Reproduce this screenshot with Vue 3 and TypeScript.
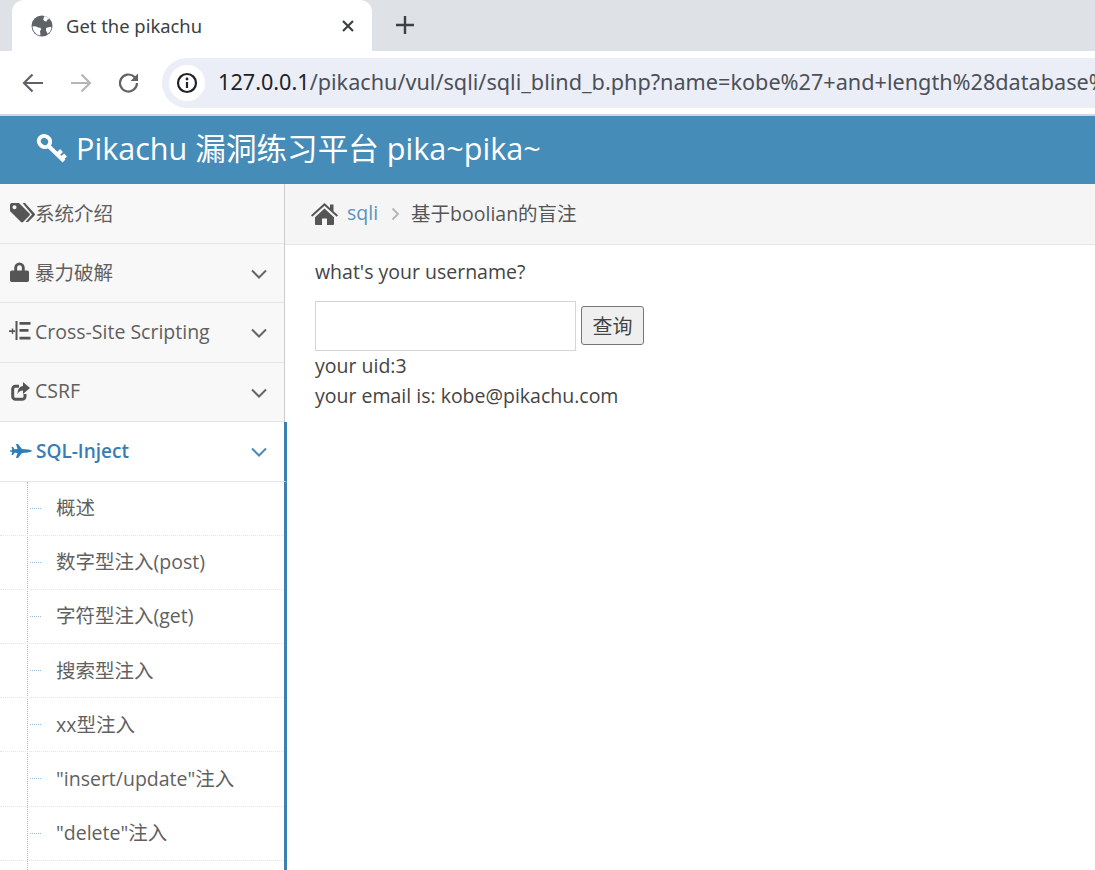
<script setup lang="ts">
interface MenuItem { label: string; icon: string; chevron: boolean }
const menu: MenuItem[] = [
  { label: '系统介绍', icon: 'tags', chevron: false },
  { label: '暴力破解', icon: 'lock', chevron: true },
  { label: 'Cross-Site Scripting', icon: 'list', chevron: true },
  { label: 'CSRF', icon: 'share', chevron: true },
]
const subs: string[] = ['概述', '数字型注入(post)', '字符型注入(get)', '搜索型注入', 'xx型注入', '"insert/update"注入', '"delete"注入', '']
</script>

<template>
  <div class="page">
    <div class="tabstrip">
      <div class="tab">
        <svg class="globe" width="22" height="22" viewBox="0 0 22 22">
          <circle cx="11" cy="11" r="10.500" fill="#5f6368" />
          <path d="M1.500 11.500c2-.6 4-.2 5.500 1l2.500.3.600 1.700-1.100 1.800.5 3.700-1.500.4C4.500 19 1.800 15.500 1.500 11.500zM13.500 1c2 .5 3.800 1.500 5 3l-2 .6-1 1.900-2.300-.6-1-1.700zM15 13l4.500-1.200 1 1.200c-.5 2.500-2 4.600-4 5.800L15 15.500z" fill="#fff" />
        </svg>
        <span class="tabtitle">Get the pikachu</span>
        <svg class="tabclose" width="14" height="14" viewBox="0 0 14 14"><path d="M2 2l10 10M12 2L2 12" stroke="#3c4043" stroke-width="2.200" /></svg>
      </div>
      <svg class="newtab" width="18" height="18" viewBox="0 0 18 18"><path d="M9 0v18M0 9h18" stroke="#3c4043" stroke-width="2.400" /></svg>
    </div>
    <div class="toolbar">
      <svg class="nav first" width="24" height="24" viewBox="0 0 24 24"><path d="M22 12H3M11.500 3.500L3 12l8.500 8.500" fill="none" stroke="#5f6368" stroke-width="2.200" /></svg>
      <svg class="nav" width="24" height="24" viewBox="0 0 24 24"><path d="M2 12h19M12.500 3.500L21 12l-8.500 8.500" fill="none" stroke="#b4b6b9" stroke-width="2.200" /></svg>
      <svg class="nav" width="24" height="24" viewBox="0 0 24 24"><path d="M20 12a8.500 8.500 0 1 1-2.600-6.100L20 8.500" fill="none" stroke="#5f6368" stroke-width="2.200" /><path d="M21 2.500V10h-7.500z" fill="#5f6368" /></svg>
      <div class="omnibox">
        <span class="info">
          <svg width="22" height="22" viewBox="0 0 22 22"><circle cx="11" cy="11" r="9" fill="none" stroke="#202124" stroke-width="2.200" /><path d="M11 10v6" stroke="#202124" stroke-width="2.200" /><circle cx="11" cy="7" r="1.400" fill="#202124" /></svg>
        </span>
        <span class="url"><span class="dark">127.0.0.1</span>/pikachu/vul/sqli/sqli_blind_b.php?name=kobe%27+and+length%28database%</span>
      </div>
    </div>
    <div class="toolbar-line"></div>
    <header class="brand">
      <svg class="key" width="32" height="32" viewBox="0 0 32 32">
        <ellipse cx="8.500" cy="9.500" rx="5.800" ry="5.300" transform="rotate(35 8.500 9.500)" fill="none" stroke="#fff" stroke-width="4" />
        <path d="M12.500 14l15.500 15M21.500 22.500l4-4M25.500 27l4-4" fill="none" stroke="#fff" stroke-width="4" />
      </svg>
      <span class="title">Pikachu 漏洞练习平台 pika~pika~</span>
    </header>
    <div class="body">
      <aside class="sidebar">
        <div v-for="m in menu" :key="m.label" class="row">
          <span class="ic">
            <svg v-if="m.icon === 'tags'" width="25" height="21" viewBox="0 0 25 21"><path d="M0 3a2 2 0 0 1 2-2h7l10.500 10.500a1.500 1.500 0 0 1 0 2L13 20a1.500 1.500 0 0 1-2 0L0 9zM4.500 3.200a2 2 0 1 0 .01 0z" fill="#555" fill-rule="evenodd" /><path d="M12.500 1h2.500l9.500 10.500a1.500 1.500 0 0 1 0 2L18 20h-2.500l6.500-7.500z" fill="#555" /></svg>
            <svg v-else-if="m.icon === 'lock'" width="19" height="20" viewBox="0 0 20 21"><path d="M4.500 9V6a5.500 5.500 0 0 1 11 0v3h2.700a1.800 1.800 0 0 1 1.800 1.800v8.400a1.800 1.800 0 0 1-1.800 1.800H1.800A1.800 1.800 0 0 1 0 19.200v-8.400A1.800 1.800 0 0 1 1.800 9zM7.500 9h5V6a2.500 2.500 0 0 0-5 0z" fill="#555" fill-rule="evenodd" /></svg>
            <svg v-else-if="m.icon === 'list'" class="shift" width="22" height="20" viewBox="0 0 22 20"><path d="M0 9.300h6v1.800H0zM6.500 0h2v19h-2zM10.500 1h11v2.700h-11zM10.500 8h9v2.700h-9zM10.500 15.700h11v2.700h-11z" fill="#555" /><path d="M3.500 7.500v5.400" stroke="#555" stroke-width="1.400" /></svg>
            <svg v-else class="share" width="19" height="19" viewBox="0 0 19 19"><path d="M14 12v2.500a2.800 2.800 0 0 1-2.800 2.800H4.500a2.800 2.800 0 0 1-2.800-2.800V7a2.800 2.800 0 0 1 2.800-2.800H8" fill="none" stroke="#555" stroke-width="3" /><path d="M12 0l7 6-7 6V8.500C9.500 8.500 7.500 9.500 6.500 12.500 6.500 7.500 8.500 4.500 12 4z" fill="#555" /></svg>
          </span>
          <span class="lbl">{{ m.label }}</span>
          <svg v-if="m.chevron" class="chev" width="16" height="10" viewBox="0 0 16 10"><path d="M1 1.500l7 7 7-7" fill="none" stroke="#666" stroke-width="2" /></svg>
        </div>
        <div class="row active">
          <span class="ic">
            <svg width="22" height="14" viewBox="0 0 22 14"><path d="M6 0h2l4 5 6 .6C20.500 6 22 6.500 22 7s-1.500 1-4 1.400L12 9l-4 5H6l1.500-5-3-.3L3 11H1.500L2.300 8 0 7.500v-1L2.300 6 1.500 3H3l1.500 2.300 3-.3z" fill="#2b7dbc" /></svg>
          </span>
          <span class="lbl strong">SQL-Inject</span>
          <svg class="chev" width="16" height="10" viewBox="0 0 16 10"><path d="M1 1.500l7 7 7-7" fill="none" stroke="#4b88b8" stroke-width="2" /></svg>
        </div>
        <ul class="sub">
          <li v-for="s in subs" :key="s"><span class="tick"></span><span class="subtext">{{ s }}</span></li>
        </ul>
      </aside>
      <main class="main">
        <nav class="crumbs">
          <svg class="home" width="27" height="22" viewBox="0 0 27 22"><path d="M13.500 0l5.500 5V1.500h3.500v6.700l4.500 4.100-1.300 1.500L13.500 2.700 1.300 13.800 0 12.300zM4 14.300l9.500-8.700 9.500 8.700V21a1 1 0 0 1-1 1h-6v-6.500h-5V22H5a1 1 0 0 1-1-1z" fill="#555" /></svg>
          <a class="link">sqli</a>
          <svg class="sep" width="9" height="14" viewBox="0 0 9 14"><path d="M1.500 1.500L7 7l-5.500 5.500" fill="none" stroke="#b4b4b4" stroke-width="1.800" /></svg>
          <span class="cur">基于boolian的盲注</span>
        </nav>
        <section class="content">
          <p class="q">what's your username?</p>
          <form class="form" @submit.prevent>
            <input class="inp" type="text" />
            <button class="btn" type="button">查询</button>
          </form>
          <p class="line">your uid:3</p>
          <p class="line">your email is: kobe@pikachu.com</p>
        </section>
      </main>
    </div>
  </div>
</template>

<style>
html, body { margin: 0; padding: 0; overflow: hidden; background: #fff; }
</style>

<style scoped>
.page {
  width: 1095px;
  height: 870px;
  overflow: hidden;
  display: flex;
  flex-direction: column;
  font-family: "Open Sans", "Noto Sans CJK SC", sans-serif;
  color: #444;
}
.tabstrip {
  height: 51px;
  background: #dee1e6;
  display: flex;
  align-items: flex-end;
  padding-left: 12px;
  flex: none;
}
.tab {
  width: 360px;
  height: 51px;
  background: #fff;
  border-radius: 12px 12px 0 0;
  display: flex;
  align-items: center;
  padding: 0 17px 0 19px;
  box-sizing: border-box;
}
.tabtitle {
  margin-left: 13px;
  flex: 1;
  font-family: "Noto Sans", sans-serif;
  font-size: 18.400px;
  color: #3c4043;
}
.newtab { margin: 0 0 17px 24px; }
.toolbar {
  height: 63px;
  display: flex;
  align-items: center;
  padding-left: 21px;
  flex: none;
  background: #fff;
}
.nav { margin-right: 24px; }
.omnibox {
  flex: 1;
  height: 50px;
  margin-left: -3px;
  background: #ebeef7;
  border-radius: 25px 0 0 25px;
  display: flex;
  align-items: center;
  overflow: hidden;
  padding-left: 7px;
  min-width: 0;
}
.info {
  width: 36px;
  height: 36px;
  border-radius: 50%;
  background: #fff;
  display: flex;
  align-items: center;
  justify-content: center;
  flex: none;
}
.url {
  margin-left: 13px;
  margin-top: -2px;
  font-family: "Noto Sans", sans-serif;
  font-size: 21.650px;
  color: #4c5058;
  white-space: nowrap;
  flex: none;
  width: 885px;
  overflow: hidden;
}
.dark { color: #202124; }
.toolbar-line { height: 2px; background: #d3d6db; flex: none; }
.brand {
  height: 68px;
  background: #468cb8;
  color: #fff;
  display: flex;
  align-items: center;
  padding-left: 36px;
  flex: none;
}
.title { font-size: 30.600px; margin-top: -6px; }
.key { margin-right: 8px; flex: none; margin-top: -4px; }
.body { flex: 1; display: flex; min-height: 0; }
.sidebar {
  width: 285px;
  flex: none;
  background: #f8f8f8;
  border-right: 1px solid #ccc;
  box-sizing: border-box;
  position: relative;
}
.row {
  height: 59.500px;
  display: flex;
  align-items: center;
  padding: 0 0 2px 10px;
  border-bottom: 1px solid #e5e5e5;
  box-sizing: border-box;
  color: #5f5f5f;
  font-size: 19.500px;
  position: relative;
}
.ic { width: 25px; display: flex; align-items: center; flex: none; }
.shift { margin-left: -1px; }
.share { margin-left: 1px; margin-top: 2px; }
.lbl { white-space: nowrap; }
.strong { margin-left: 1px; font-size: 19px; }
.chev { position: absolute; right: 17px; top: 25px; }
.row.active {
  background: #fff;
  color: #3b7cb4;
  font-weight: 600;
  margin-right: -3px;
  border-right: 3px solid #3d80b3;
  padding-bottom: 0;
}
.sub {
  list-style: none;
  margin: 0 -3px 0 0;
  padding: 0;
  background: #fff;
  border-right: 3px solid #3d80b3;
  position: relative;
  height: 390px;
}
.sub::before {
  content: "";
  position: absolute;
  left: 27px;
  top: 0;
  bottom: 0;
  border-left: 1px dotted #9dbdd6;
}
.sub li {
  height: 54.200px;
  box-sizing: border-box;
  border-bottom: 1px dotted #e4e4e4;
  padding-left: 56px;
  display: flex;
  align-items: center;
  font-size: 19.500px;
  color: #616161;
  position: relative;
  white-space: nowrap;
}
.subtext { margin-top: -3px; }
.tick {
  position: absolute;
  left: 30px;
  top: 26px;
  width: 11px;
  border-top: 1px dotted #9dbdd6;
}
.main { flex: 1; min-width: 0; }
.crumbs {
  height: 61px;
  box-sizing: border-box;
  background: #f5f5f5;
  border-bottom: 1px solid #e5e5e5;
  display: flex;
  align-items: center;
  padding: 0 0 3px 26px;
  font-size: 19.500px;
  color: #555;
}
.home { flex: none; margin-top: 3px; }
.link { color: #5a93bd; margin-left: 9px; }
.sep { margin: 3px 11px 0 13px; }
.cur { color: #555; }
.content { padding: 12px 0 0 30px; font-size: 19.500px; line-height: 30px; }
.q, .line { margin: 0; }
.form { display: flex; align-items: center; margin-top: 14px; }
.inp {
  width: 261px;
  height: 50px;
  box-sizing: border-box;
  border: 1px solid #d5d5d5;
  background: #fff;
  padding: 0;
  outline: none;
}
.btn {
  width: 63px;
  height: 39px;
  margin-left: 5px;
  margin-bottom: 1px;
  padding: 0;
  box-sizing: border-box;
  background: #efefef;
  border: 1px solid #767676;
  border-radius: 3px;
  font-family: "Open Sans", "Noto Sans CJK SC", sans-serif;
  font-size: 20px;
  color: #444;
}
</style>
